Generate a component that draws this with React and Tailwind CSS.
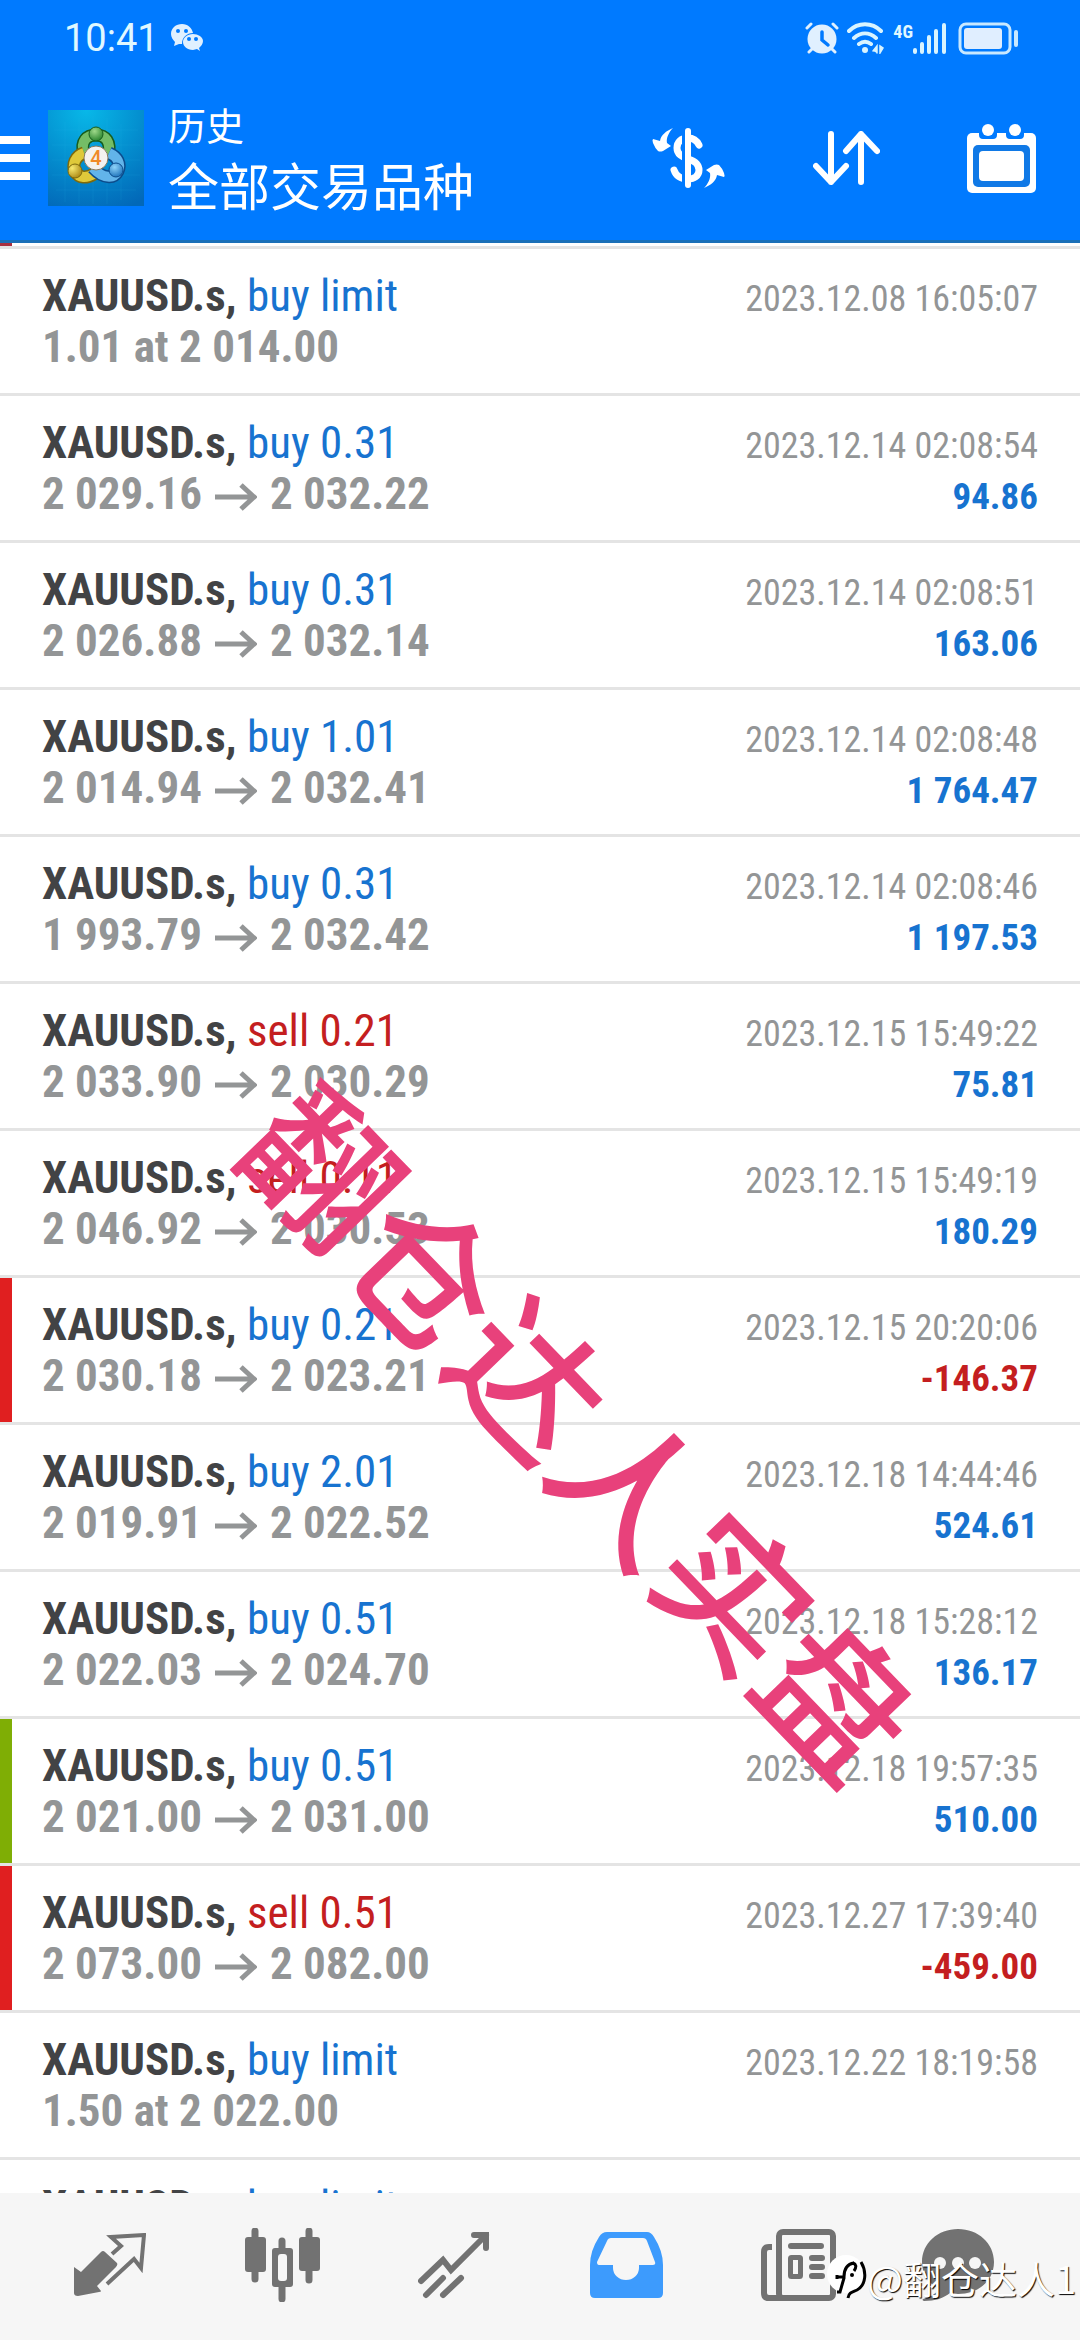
import React from "react";

const deals = [
  { type: "buy limit", text: "1.01 at 2 014.00", time: "2023.12.08 16:05:07" },
  { type: "buy 0.31", open: "2 029.16", close: "2 032.22", time: "2023.12.14 02:08:54", profit: "94.86" },
  { type: "buy 0.31", open: "2 026.88", close: "2 032.14", time: "2023.12.14 02:08:51", profit: "163.06" },
  { type: "buy 1.01", open: "2 014.94", close: "2 032.41", time: "2023.12.14 02:08:48", profit: "1 764.47" },
  { type: "buy 0.31", open: "1 993.79", close: "2 032.42", time: "2023.12.14 02:08:46", profit: "1 197.53" },
  { type: "sell 0.21", open: "2 033.90", close: "2 030.29", time: "2023.12.15 15:49:22", profit: "75.81" },
  { type: "sell 0.11", open: "2 046.92", close: "2 030.53", time: "2023.12.15 15:49:19", profit: "180.29" },
  { type: "buy 0.21", open: "2 030.18", close: "2 023.21", time: "2023.12.15 20:20:06", profit: "-146.37", mark: "sl" },
  { type: "buy 2.01", open: "2 019.91", close: "2 022.52", time: "2023.12.18 14:44:46", profit: "524.61" },
  { type: "buy 0.51", open: "2 022.03", close: "2 024.70", time: "2023.12.18 15:28:12", profit: "136.17" },
  { type: "buy 0.51", open: "2 021.00", close: "2 031.00", time: "2023.12.18 19:57:35", profit: "510.00", mark: "tp" },
  { type: "sell 0.51", open: "2 073.00", close: "2 082.00", time: "2023.12.27 17:39:40", profit: "-459.00", mark: "sl" },
  { type: "buy limit", text: "1.50 at 2 022.00", time: "2023.12.22 18:19:58" },
  { type: "buy limit" },
];

const markColors = { sl: "bg-[#e01f20]", tp: "bg-[#7fae05]" };

function WeChat() {
  return (
    <svg width="32" height="28" viewBox="0 0 32 28" aria-hidden="true">
      <path fill="#e0f0ff" d="M11 0C5 0 0 4 0 10c0 3 2 6 4 8l-1 4 5-2 3 0c0-7 5-11 11-11C21 4 17 0 11 0Z" />
      <path fill="#e0f0ff" d="M22 10c-6 0-10 4-10 8s4 8 10 8l4-1 3 2-1-3c2-2 4-4 4-7 0-4-5-7-10-7Z" />
      <g fill="#007aff"><circle cx="7" cy="7" r="2" /><circle cx="15" cy="7" r="2" /><circle cx="18" cy="15" r="2" /><circle cx="25" cy="15" r="2" /></g>
    </svg>
  );
}

function Alarm() {
  return (
    <svg width="34" height="32" viewBox="0 0 34 32" fill="none" strokeLinecap="round" aria-hidden="true">
      <circle cx="17" cy="17" r="14.500" fill="#e0f0ff" />
      <path d="M2 6 6 2M32 6l-4-4M4 30l3-3M30 30l-3-3" stroke="#e0f0ff" strokeWidth="3" />
      <path d="M17 10v8l6 5" stroke="#007aff" strokeWidth="3.500" />
    </svg>
  );
}

function Wifi() {
  return (
    <svg width="38" height="32" viewBox="0 0 38 32" fill="none" stroke="#d8f4ff" strokeLinecap="round" aria-hidden="true">
      <path d="M2 9C11 0 25 0 34 9M7 16c7-6 15-6 22 0M12 22c4-3 8-3 12 0" strokeWidth="4" />
      <circle cx="18" cy="28" r="3" fill="#d8f4ff" stroke="none" />
      <path d="M26 29l4-5v7M33 24v7l3-5z" strokeWidth="1.500" fill="#d8f4ff" />
    </svg>
  );
}

function Signal() {
  return (
    <svg width="33" height="32" viewBox="0 0 33 32" stroke="#d8f4ff" strokeWidth="4" strokeLinecap="round" aria-hidden="true">
      <path d="M2 28v2M9 22v8M16 15v15M23 9v21M31 3v27" />
    </svg>
  );
}

function Battery() {
  return (
    <svg width="61" height="33" viewBox="0 0 61 33" aria-hidden="true">
      <rect x="2" y="2" width="50" height="29" rx="6" fill="none" stroke="#c8e8ff" strokeWidth="3" />
      <rect x="6" y="6" width="38" height="21" rx="3" fill="#e0eeff" />
      <rect x="56" y="8" width="4" height="17" rx="2" fill="#c8e8ff" />
    </svg>
  );
}

function AppLogo() {
  return (
    <svg width="96" height="96" viewBox="0 0 96 96" role="img" aria-label="MetaTrader 4">
      <defs>
        <radialGradient id="logoBg" cx="0.4" cy="0" r="1.1">
          <stop offset="0" stopColor="#08b8e8" /><stop offset="0.5" stopColor="#0490d0" /><stop offset="1" stopColor="#0268b8" />
        </radialGradient>
        <radialGradient id="green" cx="0.4" cy="0.3" r="0.8"><stop offset="0" stopColor="#9fd98a" /><stop offset="1" stopColor="#1c7a24" /></radialGradient>
        <radialGradient id="gold" cx="0.3" cy="0.3" r="0.8"><stop offset="0" stopColor="#f7ea70" /><stop offset="1" stopColor="#a88410" /></radialGradient>
        <radialGradient id="blue" cx="0.4" cy="0.3" r="0.8"><stop offset="0" stopColor="#8fd4fa" /><stop offset="1" stopColor="#1268b4" /></radialGradient>
      </defs>
      <rect width="96" height="96" fill="url(#logoBg)" />
      <path d="M17 12v80M31 8v86M45 6v88M59 8v86M73 14v76M6 20h84M4 35h88M4 50h88M4 65h88M8 80h80" stroke="#3cc0ee" strokeOpacity=".12" />
      <g fill="none">
        <path d="M36 44C32 31 39 25 48 25s16 6 12 22" stroke="#175d1d" strokeWidth="13" />
        <path d="M36 44C32 31 39 25 48 25s16 6 12 22" stroke="#74bd66" strokeWidth="10" />
        <path d="M36 43C27 46 24 55 27 61c4 8 12 7 19 3" stroke="#7d6a0c" strokeWidth="13" />
        <path d="M36 43C27 46 24 55 27 61c4 8 12 7 19 3" stroke="#dfc93a" strokeWidth="10" />
        <path d="M61 43c9 4 12 11 9 18-4 8-15 8-25-3" stroke="#0c4c8c" strokeWidth="13" />
        <path d="M61 43c9 4 12 11 9 18-4 8-15 8-25-3" stroke="#62b4ea" strokeWidth="10" />
      </g>
      <circle cx="48" cy="24" r="7" fill="url(#green)" stroke="#175d1d" />
      <circle cx="27" cy="61" r="7" fill="url(#gold)" stroke="#7d6a0c" />
      <circle cx="68" cy="60" r="7" fill="url(#blue)" stroke="#0c4c8c" />
      <circle cx="48" cy="48" r="12" fill="#f4f2f0" stroke="#8a7a60" />
      <text x="48" y="55" textAnchor="middle" fontFamily="Roboto, sans-serif" fontWeight="500" fontSize="20" fill="#f08a28">4</text>
    </svg>
  );
}

function CurrencyIcon() {
  const arrow = "M21 0C14 3 9 7 8 13L1 11Q0 12 1 15 3 20 6 23 8 24 11 23L19 18 15 15C14 10 17 4 21 0Z";
  return (
    <svg width="74" height="60" viewBox="0 0 74 60" aria-hidden="true">
      <path d={arrow} fill="#fff" />
      <path d={arrow} fill="#fff" transform="rotate(180 36.500 30)" />
      <path d="M47 17C44 11 40 10 36 10 29 10 25 14 25 20c0 7 6 9 11 11 7 2 11 5 11 11 0 6-5 9-11 9-7 0-12-3-14-9" fill="none" stroke="#fff" strokeWidth="7" strokeLinecap="round" />
      <path d="M31.500 0v60" stroke="#007aff" strokeWidth="3" />
      <path d="M36 3v54" stroke="#fff" strokeWidth="6" strokeLinecap="round" />
    </svg>
  );
}

function SortIcon() {
  return (
    <svg width="67" height="54" viewBox="0 0 67 54" fill="none" stroke="#fff" strokeWidth="6" strokeLinecap="round" strokeLinejoin="round" aria-hidden="true">
      <path d="M18 3v48M3 35l15 16 15-16M48 51V3M33 20 48 3l16 17" />
    </svg>
  );
}

function CalendarIcon() {
  return (
    <svg width="69" height="69" viewBox="0 0 69 69" aria-hidden="true">
      <rect y="9" width="69" height="60" rx="5" fill="#fff" />
      <path d="M12 8h18v3q0 4-4 4H16q-4 0-4-4ZM39 8h18v3q0 4-4 4H43q-4 0-4-4Z" fill="#007aff" />
      <circle cx="21" cy="6" r="6" fill="#fff" /><circle cx="48" cy="6" r="6" fill="#fff" />
      <rect x="6" y="21" width="57" height="42" rx="5" fill="#1079e6" />
      <rect x="12" y="27" width="45" height="30" rx="4" fill="#fff" />
    </svg>
  );
}

function PriceArrow() {
  return (
    <svg className="mx-[13px] inline-block" width="42" height="28" viewBox="0 0 42 28" fill="none" stroke="#939596" strokeWidth="5" role="img" aria-label="to">
      <path d="M0 14h39M26 2l13 12-13 12" />
    </svg>
  );
}

const QuotesIcon = () => (
  <svg width="72" height="64" viewBox="0 0 72 64">
    <path d="M0 34l7 5 20-20q2-2 4 0l12 11q1 2-1 4L23 53l4 5q0 1-2 1L4 63q-4 0-4-3Z" fill="#727272" />
    <path d="M38 21l9-8-10-9 33-2-3 33-7-9-27 25" fill="none" stroke="#727272" strokeWidth="4" />
  </svg>
);

const ChartIcon = () => (
  <svg width="75" height="74" viewBox="0 0 75 74">
    <path d="M10 3v48M37 13v58M64 3v49" stroke="#727272" strokeWidth="7" strokeLinecap="round" />
    <rect y="9" width="21" height="35" rx="3" fill="#727272" /><rect x="54" y="9" width="21" height="34" rx="3" fill="#727272" />
    <rect x="27" y="20" width="21" height="39" rx="3" fill="#727272" /><rect x="33" y="26" width="9" height="27" rx="3" fill="#f6f6f6" />
  </svg>
);

const TradeIcon = () => (
  <svg width="72" height="67" viewBox="0 0 72 67" fill="none" stroke="#727272" strokeWidth="6" strokeLinecap="round">
    <path d="M3 49l22-21 8 10L68 3M56 3h12v13M8 63l17-17M25 63l18-17" />
  </svg>
);

const HistoryIcon = () => (
  <svg width="73" height="66" viewBox="0 0 73 66">
    <path fill="#3d9bfd" fillRule="evenodd" d="M17 0H57q4 0 7 5 9 14 9 28v28q0 5-5 5H5q-5 0-5-5V33Q0 19 9 5q3-5 8-5ZM21 6q-3 0-4 3L7 30q0 3 2 3H23v3a13 12 0 0 0 26 0v-3H63q3 0 2-3L57 9q-1-3-4-3Z" />
  </svg>
);

const NewsIcon = () => (
  <svg width="75" height="72" viewBox="0 0 75 72" fill="none" stroke="#727272" strokeWidth="6">
    <rect x="18" y="3" width="54" height="66" rx="4" />
    <path d="M11 18H8q-5 0-5 5v41q0 5 5 5h14" />
    <path d="M30 17h30M51 29h10M51 38h10M51 47h10" strokeLinecap="round" />
    <rect x="29.500" y="28.500" width="10" height="19" rx="1" strokeWidth="5" />
  </svg>
);

const ChatIcon = () => (
  <svg width="72" height="72" viewBox="0 0 72 72">
    <path fill="#727272" d="M36 0C16 0 0 14 0 33c0 12 7 22 17 27-3 5-9 8-16 10-1 1 0 2 1 2 11 0 20-3 26-8l8 1c20 0 36-13 36-32S56 0 36 0Z" />
    <g fill="#f6f6f6"><circle cx="18" cy="34" r="6" /><circle cx="36" cy="34" r="6" /><circle cx="53" cy="34" r="6" /></g>
  </svg>
);

function StampLogo() {
  return (
    <svg width="40" height="46" viewBox="0 0 40 46" fill="none" aria-hidden="true">
      <circle cx="19" cy="19" r="19" fill="#fff" />
      <path d="M34 7c6 10 5 23-4 28-4 2-8 2-9 8" stroke="#000" strokeWidth="3" />
      <path d="M10 37h3l4-14M9 22h8c0-8 3-13 10-14M10 20v4M26 8c3 1 4 4 1 8" stroke="#000" strokeWidth="3" />
      <circle cx="25" cy="20" r="2" fill="#000" />
    </svg>
  );
}

function Deal({ deal }) {
  const { type, text, open, close, time, profit, mark } = deal;
  return (
    <li className="flex shrink-0 border-t-[3px] border-[#e4e4e4]">
      <div className={`w-3 shrink-0 ${mark ? markColors[mark] : ""}`} />
      <div className="flex-1 py-[21px] pr-[42px] pl-[30px] text-[45px] leading-[51px] whitespace-nowrap">
        <div className="flex h-[51px] items-baseline justify-between">
          <p>
            <span className="font-bold text-[#424345]">XAUUSD.s,</span>{" "}
            <span className={type.startsWith("buy") ? "text-[#1773d0]" : "text-[#c41e20]"}>{type}</span>
          </p>
          <p className="text-[36px] text-[#939596]">{time}</p>
        </div>
        <div className="flex h-[51px] items-baseline justify-between font-bold">
          <p className="text-[#939596]">
            {text || (open && <>{open}<PriceArrow />{close}</>)}
          </p>
          <p className={`text-[37px] ${profit && profit.startsWith("-") ? "text-[#c41e20]" : "text-[#1773d0]"}`}>{profit}</p>
        </div>
      </div>
    </li>
  );
}

const tabs = [
  ["行情", QuotesIcon], ["图表", ChartIcon], ["交易", TradeIcon], ["历史", HistoryIcon], ["新闻", NewsIcon], ["消息", ChatIcon],
];

export default function App() {
  return (
    <div className="relative flex h-screen flex-col overflow-hidden bg-white font-['Roboto_Condensed',Roboto,'Noto_Sans_CJK_SC',sans-serif]">
      <header className="shrink-0 border-b-[3px] border-[#1a70b8] bg-[#007aff] text-white">
        <div className="flex h-[76px] items-center justify-between pr-[61px] pl-16 text-[#e0f8ff]">
          <div className="flex items-center gap-3">
            <span className="font-[Roboto,sans-serif] text-[38px] leading-[76px]">10:41</span>
            <WeChat />
          </div>
          <div className="flex items-center">
            <Alarm />
            <div className="ml-2 flex"><Wifi /></div>
            <span className="ml-2 self-start text-[18px] leading-5 font-bold">4G</span>
            <Signal />
            <div className="ml-3 flex"><Battery /></div>
          </div>
        </div>
        <div className="flex h-[164px] items-center pr-[44px]">
          <button aria-label="菜单" className="flex h-11 w-[30px] flex-col justify-between">
            <span className="h-2 w-full bg-white" /><span className="h-2 w-full bg-white" /><span className="h-2 w-full bg-white" />
          </button>
          <div className="ml-[18px] flex"><AppLogo /></div>
          <div className="ml-6 flex-1 pb-2 font-['Noto_Sans_CJK_SC',sans-serif]">
            <p className="text-[38px] leading-[60px]">历史</p>
            <h1 className="text-[51px] leading-[60px]">全部交易品种</h1>
          </div>
          <div className="flex items-center gap-[87px]">
            <button aria-label="品种"><CurrencyIcon /></button>
            <button aria-label="排序"><SortIcon /></button>
            <button aria-label="日期"><CalendarIcon /></button>
          </div>
        </div>
      </header>
      <div className="h-[3px] w-3 shrink-0 bg-[#a83040]" />
      <ul className="flex min-h-0 flex-1 flex-col overflow-hidden">
        {deals.map((deal, i) => <Deal key={i} deal={deal} />)}
      </ul>
      <nav className="grid h-[147px] shrink-0 grid-cols-6 bg-[#f6f6f6] px-6 pb-[3px]">
        {tabs.map(([name, Icon]) => (
          <button key={name} aria-label={name} className="flex items-center justify-center last:pr-6"><Icon /></button>
        ))}
      </nav>
      <div className="pointer-events-none absolute top-[1428px] left-[585px] -translate-x-1/2 -translate-y-1/2">
        <p className="rotate-[46deg] font-['Noto_Sans_CJK_SC',sans-serif] text-[148px] leading-none font-medium whitespace-nowrap text-[#e8417b]">翻仓达人实盘</p>
      </div>
      <div className="pointer-events-none absolute right-1 bottom-9 flex items-center">
        <StampLogo />
        <span className="font-['Noto_Sans_CJK_SC',sans-serif] text-[38px] leading-[52px] text-white [text-shadow:1px_1px_1px_#000]">@翻仓达人1</span>
      </div>
    </div>
  );
}
